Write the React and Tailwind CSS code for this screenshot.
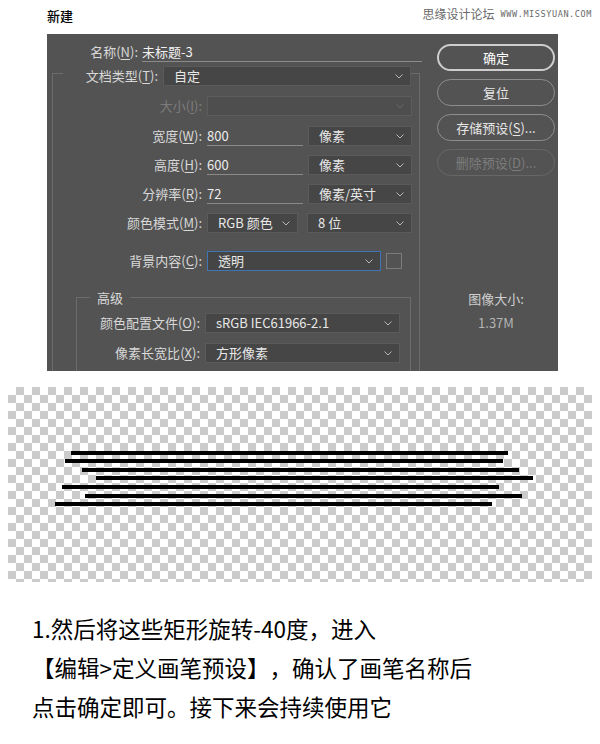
const Chevron = ({ color = "#b8b8b8" }) => (
  <svg width="8" height="5" viewBox="0 0 8 5" className="shrink-0">
    <polyline points="0.5,0.5 4,4 7.5,0.5" fill="none" stroke={color} strokeWidth="1" />
  </svg>
);

const Key = ({ k }) => (
  <>
    (<span className="underline underline-offset-2">{k}</span>):
  </>
);

const Select = ({ value, className = "", disabled, focused }) => (
  <div
    className={`h-[20px] flex items-center justify-between pl-[10px] pr-[7px] border ${
      focused
        ? "border-[#3f74b5] bg-[#454545]"
        : disabled
        ? "border-[#5c5c5c] bg-[#4e4e4e]"
        : "border-[#5a5a5a] bg-[#464646]"
    } ${className}`}
  >
    <span className="text-[#e8e8e8] whitespace-nowrap">{value}</span>
    <Chevron color={disabled ? "#6a6a6a" : "#b8b8b8"} />
  </div>
);

const Field = ({ value, className = "" }) => (
  <div className={`h-[20px] flex items-center border-b border-[#8a8a8a] ${className}`}>
    <span className="text-[#ececec]">{value}</span>
  </div>
);

const Row = ({ label, k, labelW = "w-[149px]", disabled, className = "", children }) => (
  <div className={`flex items-center h-[20px] gap-[5px] ${className}`}>
    <div className={`${labelW} shrink-0 text-right whitespace-nowrap ${disabled ? "text-[#7c7c7c]" : "text-[#d8d8d8]"}`}>
      {label}
      <Key k={k} />
    </div>
    {children}
  </div>
);

const Btn = ({ children, variant }) => {
  const cls =
    variant === "primary"
      ? "border-2 border-[#cdcdcd] text-white"
      : variant === "disabled"
      ? "border border-[#676767] text-[#7c7c7c]"
      : "border border-[#8e8e8e] text-[#e6e6e6]";
  return (
    <div className={`h-[27px] w-[118px] rounded-full flex items-center justify-center text-[13px] ${cls}`}>
      {children}
    </div>
  );
};

const lines = [
  [63, 500, 64],
  [57, 495, 72],
  [74, 511, 81],
  [88, 525, 89],
  [54, 491, 98],
  [77, 514, 107],
  [47, 484, 115],
];

export default function App() {
  return (
    <div className="w-[600px] h-[744px] bg-white overflow-hidden font-['Noto_Sans_CJK_SC',sans-serif]">
      {/* header */}
      <div className="h-[34px] flex items-center justify-between pl-[47px] pr-[8px] pb-[3px]">
        <span className="text-[13px] text-black font-medium">新建</span>
        <div className="flex items-center gap-[6px] text-[#6a6a6a] -mt-[3px]">
          <span className="text-[12px]">思缘设计论坛</span>
          <span className="text-[8.5px] tracking-[0.6px] font-['DejaVu_Sans_Mono',monospace]">WWW.MISSYUAN.COM</span>
        </div>
      </div>

      {/* dialog */}
      <div className="ml-[47px] w-[511px] h-[337px] bg-[#535353] flex overflow-hidden text-[13px]">
        <div className="w-[378px] shrink-0 pl-[5px]">
          {/* name */}
          <div className="flex items-start h-[20px] mt-[9px] gap-[4px]">
            <div className="w-[86px] h-[18px] flex items-center justify-end text-[#d8d8d8] whitespace-nowrap">
              名称<Key k="N" />
            </div>
            <div className="w-[280px] h-[19px] flex items-center border-b border-[#8a8a8a] text-[#f2f2f2]">未标题-3</div>
          </div>

          {/* document group */}
          <div className="mt-[10px] w-[368px] h-[340px] border border-[#6c6c6c]">
            <div className="-mt-[8px] h-[20px] flex items-center">
              <div className="w-[10px] shrink-0" />
              <div className="w-[100px] h-[20px] shrink-0 bg-[#535353] flex items-center justify-end pr-[5px] text-[#d8d8d8] whitespace-nowrap">
                文档类型<Key k="T" />
              </div>
              <Select value="自定" className="w-[248px]" />
            </div>

            <Row label="大小" k="I" disabled className="mt-[10px]">
              <Select value="" disabled className="w-[205px]" />
            </Row>
            <Row label="宽度" k="W" className="mt-[10px]">
              <Field value="800" className="w-[96px]" />
              <Select value="像素" className="w-[104px]" />
            </Row>
            <Row label="高度" k="H" className="mt-[9px]">
              <Field value="600" className="w-[96px]" />
              <Select value="像素" className="w-[104px]" />
            </Row>
            <Row label="分辨率" k="R" className="mt-[9px]">
              <Field value="72" className="w-[96px]" />
              <Select value="像素/英寸" className="w-[104px]" />
            </Row>
            <Row label="颜色模式" k="M" className="mt-[9px]">
              <Select value="RGB 颜色" className="w-[91px]" />
              <Select value="8 位" className="w-[105px] ml-[4px]" />
            </Row>
            <Row label="背景内容" k="C" className="mt-[18px]">
              <Select value="透明" focused className="w-[174px]" />
              <div className="w-[16px] h-[16px] border border-[#7c7c7c]" />
            </Row>

            {/* advanced group */}
            <div className="mt-[26px] ml-[23px] w-[335px] border border-[#6c6c6c] pb-[8px]">
              <div className="-mt-[9px] h-[18px] flex items-center">
                <div className="w-[13px] shrink-0" />
                <div className="h-[18px] bg-[#535353] px-[7px] flex items-center text-[#dadada]">高级</div>
              </div>
              <Row label="颜色配置文件" k="O" labelW="w-[123px]" className="mt-[6px]">
                <Select value="sRGB IEC61966-2.1" className="w-[195px]" />
              </Row>
              <Row label="像素长宽比" k="X" labelW="w-[123px]" className="mt-[10px]">
                <Select value="方形像素" className="w-[195px]" />
              </Row>
            </div>
          </div>
        </div>

        {/* buttons */}
        <div className="ml-[12px] pt-[10px] w-[118px] flex flex-col">
          <div className="flex flex-col gap-[8px]">
            <Btn variant="primary">确定</Btn>
            <Btn>复位</Btn>
            <Btn>
              存储预设(<span className="underline underline-offset-2">S</span>)...
            </Btn>
            <Btn variant="disabled">
              删除预设(<span className="underline underline-offset-2">D</span>)...
            </Btn>
          </div>
          <div className="mt-[114px] h-[18px] flex items-center justify-center text-[#cfcfcf]">图像大小:</div>
          <div className="mt-[6px] h-[18px] flex items-center justify-center text-[#b4b4b4]">1.37M</div>
        </div>
      </div>

      {/* transparent canvas preview */}
      <div className="mt-[16px] mx-[8px] h-[195px] bg-[conic-gradient(#cbcbcb_25%,#ffffff_0_50%,#cbcbcb_0_75%,#ffffff_0)] bg-[length:16px_16px]">
        <svg width="584" height="195" viewBox="0 0 584 195">
          {lines.map(([x1, x2, y], i) => (
            <rect key={i} x={x1} y={y} width={x2 - x1} height="4" fill="#000" />
          ))}
        </svg>
      </div>

      {/* caption */}
      <div className="mt-[27px] pl-[32px] pr-[20px] text-[22.5px] leading-[39px] text-black [text-spacing-trim:space-all]">
        <p>1.然后将这些矩形旋转-40度，进入</p>
        <p>【编辑&gt;定义画笔预设】，确认了画笔名称后</p>
        <p>点击确定即可。接下来会持续使用它</p>
      </div>
    </div>
  );
}
